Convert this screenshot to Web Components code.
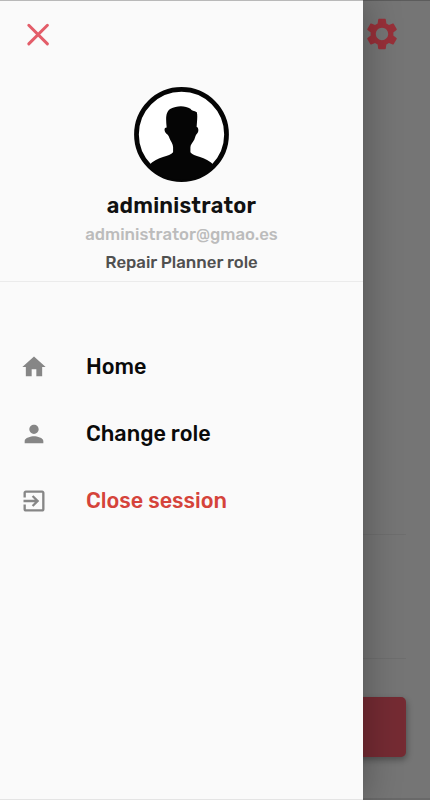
<!DOCTYPE html>
<html lang="en">
<head>
<meta charset="utf-8">
<meta name="viewport" content="width=device-width, initial-scale=1">
<title>Menu</title>
<style>
  html, body {
    margin: 0;
    height: 100%;
    overflow: hidden;
    font-family: Rubik, Roboto, "Liberation Sans", sans-serif;
  }
</style>
</head>
<body>
<app-shell>
  <home-page slot="page"></home-page>
  <side-drawer slot="drawer">
    <user-card slot="header" name="administrator" email="administrator@gmao.es" role-name="Repair Planner role"></user-card>
    <drawer-item icon="home">Home</drawer-item>
    <drawer-item icon="person">Change role</drawer-item>
    <drawer-item icon="exit" style="--color: #d5433a">Close session</drawer-item>
  </side-drawer>
</app-shell>

<script>
"use strict";

(function () {
  const icons = {
    home: "M10 20v-6h4v6h5v-8h3L12 3 2 12h3v8z",
    person: "M12 12c2.21 0 4-1.79 4-4s-1.79-4-4-4-4 1.79-4 4 1.79 4 4 4zm0 2c-2.67 0-8 1.34-8 4v2h16v-2c0-2.66-5.33-4-8-4z",
    exit: "M10.09 15.59L11.5 17l5-5-5-5-1.41 1.41L12.67 11H3v2h9.67l-2.58 2.59zM19 3H5c-1.11 0-2 .9-2 2v4h2V5h14v14H5v-4H3v4c0 1.1.89 2 2 2h14c1.1 0 2-.9 2-2V5c0-1.1-.9-2-2-2z",
    settings: "M19.14 12.94c.04-.3.06-.61.06-.94 0-.32-.02-.64-.07-.94l2.03-1.58c.18-.14.23-.41.12-.61l-1.92-3.32c-.12-.22-.37-.29-.59-.22l-2.39.96c-.5-.38-1.03-.7-1.62-.94l-.36-2.54c-.04-.24-.24-.41-.48-.41h-3.84c-.24 0-.43.17-.47.41l-.36 2.54c-.59.24-1.13.57-1.62.94l-2.39-.96c-.22-.08-.47 0-.59.22L2.74 8.87c-.12.21-.08.47.12.61l2.03 1.58c-.05.3-.09.63-.09.94s.02.64.07.94l-2.03 1.58c-.18.14-.23.41-.12.61l1.92 3.32c.12.22.37.29.59.22l2.39-.96c.5.38 1.03.7 1.62.94l.36 2.54c.05.24.24.41.48.41h3.84c.24 0 .44-.17.47-.41l.36-2.54c.59-.24 1.13-.56 1.62-.94l2.39.96c.22.08.47 0 .59-.22l1.92-3.32c.12-.22.07-.47-.12-.61l-2.01-1.58zM12 15.9c-2.15 0-3.9-1.75-3.9-3.9s1.75-3.9 3.9-3.9 3.9 1.75 3.9 3.9-1.75 3.9-3.9 3.9z",
  };

  class AppShell extends HTMLElement {
    constructor() {
      super();
      const shadow = this.attachShadow({ mode: "open" });
      shadow.innerHTML = `
        <style>
          :host {
            display: block;
            position: relative;
            height: 100vh;
            overflow: hidden;
            background: #757575;
          }
          .drawer {
            position: absolute;
            inset: 0 auto 0 0;
            width: 363px;
          }
        </style>
        <slot name="page"></slot>
        <div class="drawer"><slot name="drawer"></slot></div>
      `;
    }
  }

  // page under the drawer, already dimmed by the scrim
  class HomePage extends HTMLElement {
    constructor() {
      super();
      const shadow = this.attachShadow({ mode: "open" });
      shadow.innerHTML = `
        <style>
          :host {
            display: flex;
            flex-direction: column;
            box-sizing: border-box;
            height: 100%;
            padding: 14px 24px 41.5px;
            border-top: 1px solid #5c5c5c;
            border-bottom: 2px solid #696969;
          }
          .bar {
            display: flex;
            justify-content: flex-end;
          }
          .bar svg {
            display: block;
            width: 38px;
            height: 38px;
            margin-right: 5px;
            fill: #983039;
          }
          .rows {
            flex: 1;
            display: flex;
            flex-direction: column;
            justify-content: flex-end;
          }
          .row {
            box-sizing: border-box;
            height: 124px;
            border-top: 1px solid #6e6e6e;
          }
          .row:last-child {
            height: 38.5px;
          }
          .button {
            height: 60px;
            border-radius: 5px;
            background: #752b33;
            box-shadow: 1px 3px 6px rgba(0, 0, 0, 0.32);
          }
        </style>
        <div class="bar"><svg viewBox="0 0 24 24"><path d="${icons.settings}"/></svg></div>
        <div class="rows"><div class="row"></div><div class="row"></div></div>
        <div class="button"></div>
      `;
    }
  }

  class SideDrawer extends HTMLElement {
    constructor() {
      super();
      const shadow = this.attachShadow({ mode: "open" });
      shadow.innerHTML = `
        <style>
          :host {
            display: block;
            box-sizing: border-box;
            height: 100%;
            background: #fafafa;
            border-top: 1px solid #b9b9b9;
            border-bottom: 1px solid #e4e4e4;
            box-shadow: 0 0 36px rgba(0, 0, 0, 0.32);
          }
          .close {
            display: block;
            width: 24px;
            height: 24px;
            padding: 21.5px 0 0 26px;
            margin-bottom: -0.5px;
            stroke: #e35d69;
            stroke-width: 3;
            stroke-linecap: round;
          }
          nav {
            display: flex;
            flex-direction: column;
            padding-top: 51px;
          }
        </style>
        <svg class="close" viewBox="0 0 24 24"><path d="M2.8 2.8l18.6 18.6M21.4 2.8L2.8 21.4"/></svg>
        <slot name="header"></slot>
        <nav><slot></slot></nav>
      `;
    }
  }

  class UserCard extends HTMLElement {
    constructor() {
      super();
      const shadow = this.attachShadow({ mode: "open" });
      shadow.innerHTML = `
        <style>
          :host {
            display: flex;
            flex-direction: column;
            align-items: center;
            box-sizing: border-box;
            height: 236px;
            padding-top: 41px;
            border-bottom: 1px solid #ebebeb;
            white-space: nowrap;
          }
          svg {
            display: block;
            width: 95px;
            height: 95px;
          }
          .name {
            margin-top: 10px;
            font-size: 21.7px;
            line-height: 28px;
            font-weight: 600;
            letter-spacing: 0.2px;
            color: #111;
          }
          .email, .role {
            font-size: 16.75px;
            line-height: 24px;
            font-weight: 500;
          }
          .email {
            margin-top: 2px;
            color: #bcbcbc;
          }
          .role {
            margin-top: 4px;
            color: #505050;
          }
        </style>
        <svg viewBox="0 0 96 96">
          <clipPath id="disc"><circle cx="48" cy="48" r="46"/></clipPath>
          <circle cx="48" cy="48" r="45.5" fill="#fff" stroke="#050505" stroke-width="4.8"/>
          <path clip-path="url(#disc)" fill="#050505" d="M33 41C32 31 32 25 37 22C43 18.5 52 18.5 57 22C58 24 61 24 63.5 25.5C64.5 29 63.500 36 63.3 40.5C65.5 41 65.5 45 63.8 47C62.5 48 62 50 61 53C59.5 56 57 58 57 61V66C60 70.5 72 70 81 79L76 96H20L15 79C24 70 36 70.500 39.5 66V61C39.5 57 37 55 36 52C35 49 34 48 32.500 47C30 44 30.5 41 33 41Z"/>
        </svg>
        <div class="name">${this.getAttribute("name")}</div>
        <div class="email">${this.getAttribute("email")}</div>
        <div class="role">${this.getAttribute("role-name")}</div>
      `;
    }
  }

  class DrawerItem extends HTMLElement {
    constructor() {
      super();
      const shadow = this.attachShadow({ mode: "open" });
      shadow.innerHTML = `
        <style>
          :host {
            display: flex;
            align-items: center;
            gap: 38.5px;
            height: 67px;
            padding-left: 19.5px;
            font-size: 21.6px;
            font-weight: 500;
            color: var(--color, #0a0a0a);
            white-space: nowrap;
          }
          svg {
            width: 28px;
            height: 28px;
            fill: #868686;
          }
        </style>
        <svg viewBox="0 0 24 24"><path d="${icons[this.getAttribute("icon")]}"/></svg>
        <span><slot></slot></span>
      `;
    }
  }

  customElements.define("app-shell", AppShell);
  customElements.define("home-page", HomePage);
  customElements.define("side-drawer", SideDrawer);
  customElements.define("user-card", UserCard);
  customElements.define("drawer-item", DrawerItem);
})();
</script>
</body>
</html>
